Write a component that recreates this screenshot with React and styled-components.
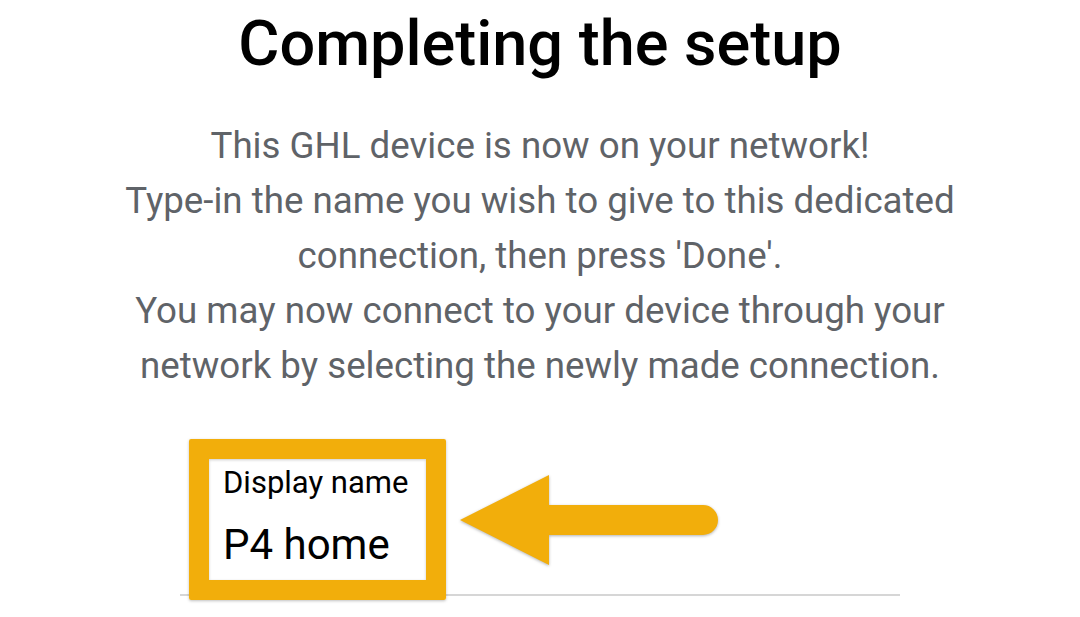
import React from "react";
import styled, { createGlobalStyle } from "styled-components";

const Global = createGlobalStyle`
  html, body { margin: 0; padding: 0; background: #ffffff; }
  body { font-family: Roboto, "Noto Sans", Arial, sans-serif; }
`;

const Page = styled.main`
  width: 1080px;
  height: 617px;
  overflow: hidden;
  display: flex;
  flex-direction: column;
  align-items: center;
  background: #fff;
`;

const Title = styled.h1`
  margin: 8px 0 0;
  font-family: Roboto, sans-serif;
  font-weight: 500;
  font-size: 63px;
  line-height: 72px;
  color: #000;
`;

const Intro = styled.p`
  margin: 38px 0 0;
  width: 860px;
  text-align: center;
  font-family: Roboto, sans-serif;
  font-weight: 400;
  font-size: 36.7px;
  line-height: 55px;
  color: #5f6368;
`;

const FieldArea = styled.div`
  position: relative;
  margin-top: 46px;
  width: 720px;
`;

const Field = styled.label`
  display: flex;
  flex-direction: column;
  padding: 0 0 0 43px;
  height: 157px;
  box-sizing: border-box;
  border-bottom: 2px solid #d6d6d6;
`;

const FieldLabel = styled.span`
  margin-top: 25px;
  font-size: 31px;
  line-height: 38px;
  color: #000;
`;

const FieldInput = styled.input`
  margin-top: 18px;
  border: none;
  outline: none;
  padding: 0;
  font-family: Roboto, sans-serif;
  font-size: 42px;
  line-height: 50px;
  color: #000;
  background: transparent;
  width: 400px;
`;

const Highlight = styled.div`
  position: absolute;
  left: 9px;
  top: 0;
  width: 217px;
  height: 121px;
  border: 20px solid #f2ae0b;
  border-radius: 2px;
  box-shadow: 0 1px 3px rgba(0, 0, 0, 0.25), inset 0 1px 3px rgba(0, 0, 0, 0.2);
  pointer-events: none;
`;

const ArrowSvg = styled.svg`
  position: absolute;
  left: 270px;
  top: 29px;
  filter: drop-shadow(0 1px 1.5px rgba(0, 0, 0, 0.3));
`;

export default function App() {
  return (
    <>
      <Global />
      <Page>
        <Title>Completing the setup</Title>
        <Intro>
          This GHL device is now on your network!
          <br />
          Type-in the name you wish to give to this dedicated connection, then press 'Done'.
          <br />
          You may now connect to your device through your network by selecting the newly made connection.
        </Intro>
        <FieldArea>
          <Field>
            <FieldLabel>Display name</FieldLabel>
            <FieldInput defaultValue="P4 home" />
          </Field>
          <Highlight />
          <ArrowSvg width="270" height="110" viewBox="0 0 270 110">
            <path
              d="M10 52 L99 7 L99 37 L253 37 A15 15 0 0 1 253 67 L99 67 L99 97 Z"
              fill="#f2ae0b"
            />
          </ArrowSvg>
        </FieldArea>
      </Page>
    </>
  );
}
